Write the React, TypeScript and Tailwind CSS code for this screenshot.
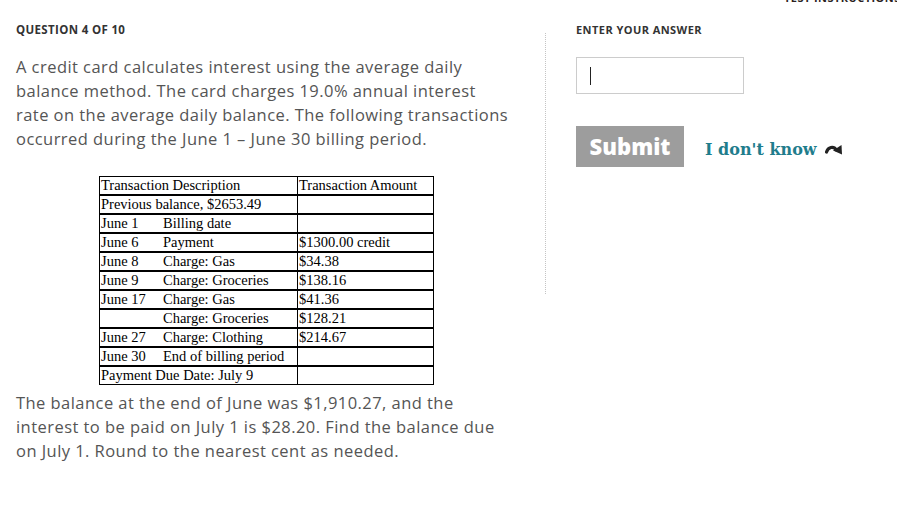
import React from "react";

const rows: [string, string, string][] = [
  ["Previous balance, $2653.49", "", ""],
  ["June 1", "Billing date", ""],
  ["June 6", "Payment", "$1300.00 credit"],
  ["June 8", "Charge: Gas", "$34.38"],
  ["June 9", "Charge: Groceries", "$138.16"],
  ["June 17", "Charge: Gas", "$41.36"],
  ["", "Charge: Groceries", "$128.21"],
  ["June 27", "Charge: Clothing", "$214.67"],
  ["June 30", "End of billing period", ""],
  ["Payment Due Date: July 9", "", ""],
];

function Table() {
  return (
    <table
      className="ml-[83px] mt-[25px] w-[335px] border-collapse text-[14.5px] leading-[17px] text-black"
      style={{ fontFamily: '"Liberation Serif", "Times New Roman", serif' }}
    >
      <tbody>
        <tr>
          <td className="w-[198px] border border-black border-b-2 px-[1px] py-0 whitespace-nowrap">Transaction Description</td>
          <td className="border border-black border-b-2 px-[1px] py-0 whitespace-nowrap">Transaction Amount</td>
        </tr>
        {rows.map((r, i) => {
          const last = i === rows.length - 1;
          const b = last ? "border border-black" : "border border-black border-b-2";
          const single = r[1] === "" && r[0].length > 8;
          return (
            <tr key={i}>
              <td className={`${b} px-[1px] py-0 whitespace-nowrap h-[17px]`}>
                {single ? (
                  r[0]
                ) : (
                  <span className="flex">
                    <span className="inline-block w-[62px]">{r[0]}</span>
                    <span>{r[1]}</span>
                  </span>
                )}
              </td>
              <td className={`${b} px-[1px] py-0 whitespace-nowrap h-[17px]`}>{r[2]}</td>
            </tr>
          );
        })}
      </tbody>
    </table>
  );
}

function Arrow() {
  return (
    <svg width="18" height="11" viewBox="0 0 18 11" className="ml-[8px]">
      <path d="M1.5 8 C3 3, 8.5 1.5, 11.5 6" fill="none" stroke="#222" strokeWidth="3.2" strokeLinecap="round" />
      <polygon points="8,6.5 17,10.5 16.5,1" fill="#222" />
    </svg>
  );
}

export default function App() {
  return (
    <div
      className="relative w-[897px] h-[522px] overflow-hidden bg-white"
      style={{ fontFamily: '"Open Sans", "DejaVu Sans", sans-serif' }}
    >
      <div className="h-[4px] overflow-hidden">
        <div className="-mt-[10px] pl-[784px] whitespace-nowrap text-[11px] font-bold leading-[15px] text-[#2b1f1f] tracking-[0.04em]">
          TEST INSTRUCTIONS
        </div>
      </div>
      <div className="flex">
        <div className="w-[545px] shrink-0 pl-4 pt-[18px]">
          <div className="text-[11.5px] font-bold leading-[15px] text-[#333] tracking-[0.03em]">QUESTION 4 OF 10</div>
          <p className="mt-[18px] whitespace-nowrap text-[16.5px] leading-[24px] tracking-[0.45px] text-[#555]">
            A credit card calculates interest using the average daily
            <br />
            balance method. The card charges 19.0% annual interest
            <br />
            rate on the average daily balance. The following transactions
            <br />
            occurred during the June 1 – June 30 billing period.
          </p>
          <Table />
          <p className="mt-[6px] whitespace-nowrap text-[16.5px] leading-[24px] tracking-[0.45px] text-[#555]">
            The balance at the end of June was $1,910.27, and the
            <br />
            interest to be paid on July 1 is $28.20. Find the balance due
            <br />
            on July 1. Round to the nearest cent as needed.
          </p>
        </div>
        <div className="mt-[29px] h-[261px] w-0 shrink-0 border-l border-dotted border-[#c4c4c4]" />
        <div className="pl-[30px] pt-[18px]">
          <div className="text-[11px] font-bold leading-[15px] text-[#333] tracking-[0.04em]">ENTER YOUR ANSWER</div>
          <div className="mt-[20px] flex h-[37px] w-[168px] items-center border border-[#cccccc] pl-[13px]">
            <span className="block h-[18px] w-px bg-[#222]" />
          </div>
          <div className="mt-[32px] flex items-center">
            <button className="flex h-[41px] w-[108px] items-center justify-center bg-[#9d9d9d] text-[22px] font-extrabold text-white">
              Submit
            </button>
            <span
              className="ml-[21px] mt-[6px] flex items-center text-[16px] font-bold text-[#1f7d8c]"
              style={{ fontFamily: '"DejaVu Serif", Georgia, serif' }}
            >
              I don't know
              <Arrow />
            </span>
          </div>
        </div>
      </div>
    </div>
  );
}
